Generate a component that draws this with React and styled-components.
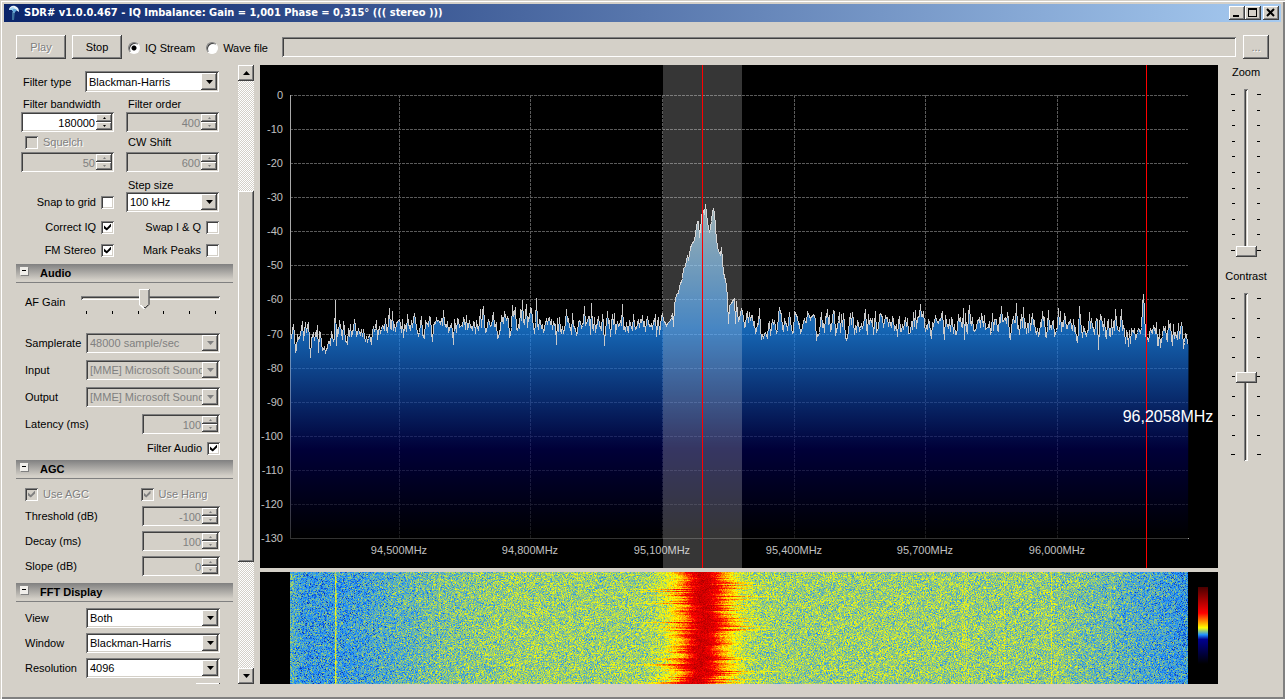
import React, { useEffect, useLayoutEffect, useMemo, useRef, useState } from 'react';
import styled, { createGlobalStyle, css } from 'styled-components';

const GlobalStyle = createGlobalStyle`
  * {
    box-sizing: border-box;
  }

  body {
    margin: 0;
    background: #d4d0c8;
    color: #000;
    font-family: 'Liberation Sans', Arial, sans-serif;
    font-size: 11px;
    line-height: 14px;
    cursor: default;
  }

  button, input, select {
    margin: 0;
    padding: 0;
    border: 0;
    border-radius: 0;
    font: inherit;
    color: inherit;
  }
`;

const raised = css`
  background: #d4d0c8;
  box-shadow: inset -1px -1px #404040, inset 1px 1px #fff, inset -2px -2px #808080;
`;

const sunken = css`
  box-shadow: inset 1px 1px #808080, inset -1px -1px #fff, inset 2px 2px #404040, inset -2px -2px #d4d0c8;
`;

const etched = css`
  color: #808080;
  text-shadow: 1px 1px #fff;
`;

/* ---------- window ---------- */

const Window = styled.div`
  display: flex;
  flex-direction: column;
  height: 100vh;
  min-height: 400px;
  padding: 4px 4px 15px;
  background: #d4d0c8;
  box-shadow: inset 1px 1px #d4d0c8, inset 2px 2px #fff, inset -1px -1px #808080, inset -2px -2px #808080;
`;

const TitleBar = styled.header`
  display: flex;
  align-items: center;
  height: 18px;
  flex: none;
  padding: 0 2px 0 4px;
  background: linear-gradient(to right, #0a246a, #a6caf0);
`;

const Title = styled.h1`
  flex: 1;
  margin: 0 0 0 4px;
  color: #fff;
  font: bold 11px/18px 'DejaVu Sans Condensed', 'DejaVu Sans', sans-serif;
  white-space: nowrap;
`;

const TitleButton = styled.button`
  ${raised}
  width: 16px;
  height: 14px;
  margin-left: ${({ $apart }) => ($apart ? 2 : 0)}px;

  svg {
    display: block;
    width: 16px;
    height: 14px;
  }
`;

const Toolbar = styled.div`
  display: flex;
  align-items: center;
  height: 43px;
  flex: none;
  padding: 7px 12px 0;
`;

const PushButton = styled.button`
  ${raised}
  width: ${({ $small }) => ($small ? 26 : 50)}px;
  height: 24px;
  margin-left: ${({ $small }) => ($small ? 7 : 0)}px;

  & + & {
    margin-left: 6px;
  }

  &:disabled {
    ${etched}
  }
`;

const RadioLabel = styled.label`
  display: flex;
  align-items: center;
  gap: 5px;
  margin-left: ${({ $first }) => ($first ? 6 : 11)}px;
  padding-top: 1px;
`;

const Radio = styled.input`
  appearance: none;
  width: 12px;
  height: 12px;
  border: 1px solid;
  border-color: #808080 #fff #fff #808080;
  border-radius: 50%;
  background: #fff;
  box-shadow: inset 1px 1px #404040;

  &:checked {
    background: radial-gradient(circle at 5px 5px, #000 2px, #fff 3px);
  }
`;

const FileBox = styled.input`
  ${sunken}
  flex: 1;
  min-width: 0;
  height: 20px;
  margin-left: 14px;
  padding: 0 4px;
  background: #d4d0c8;
`;

const Body = styled.main`
  display: flex;
  flex: 1;
  min-height: 0;
  padding: 0 7px 0 12px;
`;

/* ---------- side panel ---------- */

const Panel = styled.div`
  width: 217px;
  flex: none;
  overflow: hidden;
`;

const ScrollBar = styled.div`
  display: flex;
  flex-direction: column;
  width: 16px;
  flex: none;
  margin: 0 6px 0 5px;
  background: repeating-conic-gradient(#fff 0 25%, #d4d0c8 0 50%) 0 0 / 2px 2px;
`;

const ScrollButton = styled.button`
  ${raised}
  display: grid;
  place-items: center;
  height: 16px;
  flex: none;
`;

const ScrollTrack = styled.div`
  display: flex;
  flex-direction: column;
  flex: 1;
`;

const ScrollGap = styled.div`
  flex: ${({ $size }) => $size};
`;

const ScrollThumb = styled.div`
  ${raised}
  flex: 371;
`;

const FilterSection = styled.section`
  padding: 6px 14px 4px 5px;
`;

const FilterType = styled.div`
  display: grid;
  grid-template-columns: 62px 1fr;
  align-items: center;
  height: 21px;
  margin-bottom: 4px;
  padding-left: 2px;
`;

const Pair = styled.div`
  display: grid;
  grid-template-columns: minmax(0, 1fr) minmax(0, 1fr);
  column-gap: 12px;
  align-items: ${({ $align }) => $align || 'center'};
  height: ${({ $height }) => $height || 20}px;
  margin-top: ${({ $space }) => $space || 0}px;
`;

const Caption = styled.label`
  padding-left: 2px;
  grid-column: ${({ $column }) => $column || 'auto'};
  white-space: nowrap;
`;

const CheckLabel = styled.label`
  display: flex;
  align-items: center;
  justify-content: ${({ $end }) => ($end ? 'flex-end' : 'flex-start')};
  gap: 5px;
  height: 14px;
  padding-left: ${({ $indent }) => $indent || 0}px;
  white-space: nowrap;
  ${({ $disabled }) => $disabled && etched}
`;

const CheckBox = styled.input`
  ${sunken}
  appearance: none;
  display: grid;
  width: 13px;
  height: 13px;
  background: ${({ disabled }) => (disabled ? '#d4d0c8' : '#fff')};

  &:checked::after {
    content: '';
    width: 7px;
    height: 7px;
    margin: 3px;
    background: ${({ disabled }) => (disabled ? '#808080' : '#000')};
    clip-path: polygon(0 30%, 40% 64%, 100% 0, 100% 42%, 40% 100%, 0 70%);
  }
`;

const SelectFrame = styled.div`
  display: grid;
  width: 100%;
  height: ${({ $tall }) => ($tall ? 21 : 20)}px;
`;

const NativeSelect = styled.select`
  ${sunken}
  appearance: none;
  grid-area: 1 / 1;
  min-width: 0;
  width: 100%;
  padding: 0 8px 0 4px;
  background: #fff;
  overflow: hidden;

  &:disabled {
    background: #d4d0c8;
    color: #808080;
    opacity: 1;
  }
`;

const SelectArrow = styled.span`
  ${raised}
  display: grid;
  place-items: center;
  grid-area: 1 / 1;
  justify-self: end;
  width: 16px;
  margin: 2px;
  pointer-events: none;
`;

const SpinFrame = styled.div`
  ${sunken}
  display: flex;
  width: ${({ $narrow }) => ($narrow ? '78px' : '100%')};
  height: 20px;
  padding: 2px;
  justify-self: end;
  background: ${({ $disabled }) => ($disabled ? '#d4d0c8' : '#fff')};
`;

const SpinInput = styled.input`
  flex: 1;
  width: 0;
  min-width: 0;
  padding: 2px 1px 0 0;
  background: transparent;
  text-align: right;

  &:disabled {
    color: #808080;
  }
`;

const SpinButtons = styled.div`
  display: grid;
  grid-template-rows: 8px 8px;
  width: 16px;
`;

const SpinButton = styled.button`
  ${raised}
  display: grid;
  place-items: center;
`;

const GroupHeader = styled.h2`
  display: flex;
  align-items: center;
  gap: 12px;
  height: 19px;
  margin: 0;
  padding-left: 4px;
  border-bottom: 1px solid #808080;
  background: linear-gradient(#808080, #d4d0c8 16px);
  font-size: 11px;
  line-height: 18px;
`;

const Collapse = styled.button`
  width: 8px;
  height: 8px;
  margin-bottom: 5px;
  background: linear-gradient(#000, #000) 2px 3px / 4px 1px no-repeat #f0eeea;
  box-shadow: 1px 1px #808080;
`;

const Group = styled.section`
  display: flex;
  flex-direction: column;
  gap: ${({ $gap }) => $gap}px;
  padding: ${({ $top }) => $top}px 13px ${({ $bottom }) => $bottom}px 9px;
`;

const Field = styled.div`
  display: grid;
  grid-template-columns: 61px minmax(0, 1fr);
  align-items: center;
  height: 20px;
  white-space: nowrap;
`;

const GainField = styled.div`
  display: grid;
  grid-template-columns: 56px minmax(0, 1fr);
  align-items: start;
  height: 37px;
`;

const GainCaption = styled.label`
  padding-top: 6px;
`;

const GainRange = styled.input`
  appearance: none;
  display: block;
  width: 100%;
  height: 20px;
  background: transparent;

  &::-webkit-slider-runnable-track {
    height: 4px;
    margin: 0 0 3px;
    ${sunken}
  }

  &::-webkit-slider-thumb {
    appearance: none;
    width: 11px;
    height: 21px;
    margin-top: -7px;
    background:
      linear-gradient(#fff, #fff) 0 0 / 10px 1px no-repeat,
      linear-gradient(#fff, #fff) 0 0 / 1px 16px no-repeat,
      linear-gradient(#404040, #404040) 10px 0 / 1px 16px no-repeat,
      linear-gradient(#808080, #808080) 9px 1px / 1px 15px no-repeat,
      linear-gradient(to top right, #fff 68%, transparent 68%) 0 16px / 6px 5px no-repeat,
      linear-gradient(to top left, #404040 72%, transparent 72%) 5px 16px / 6px 5px no-repeat,
      #d4d0c8;
    clip-path: polygon(0 0, 100% 0, 100% 76%, 50% 100%, 0 76%);
  }
`;

const GainTicks = styled.div`
  display: flex;
  justify-content: space-between;
  padding: 2px 4px 0 5px;

  i {
    width: 1px;
    height: 3px;
    background: #000;
  }
`;

const NextButton = styled.button`
  ${raised}
  align-self: flex-end;
  width: 24px;
  height: 20px;
  flex: none;
`;

/* ---------- displays ---------- */

const Displays = styled.div`
  display: grid;
  grid-template-rows: 1fr 112px;
  gap: 4px;
  flex: 1;
  min-width: 0;
`;

const Screen = styled.div`
  min-width: 0;
  min-height: 0;
  overflow: hidden;
  background: #000;

  svg {
    display: block;
  }
`;

const AxisText = styled.text`
  fill: #c0c0c0;
  font-size: 11px;
`;

const CursorText = styled.text`
  fill: #fff;
  font-size: 16px;
`;

const WaterfallScreen = styled(Screen)`
  display: flex;
  padding: 0 10px 0 30px;
`;

const WaterfallPlot = styled.div`
  flex: 1;
  min-width: 0;

  canvas {
    display: block;
  }
`;

const Legend = styled.div`
  width: 10px;
  margin: 15px 0 20px 10px;
  background: linear-gradient(#4a0000, #f00 34%, #ff0 53%, #1e90ff 62%, #000090 68%, #000);
`;

const Sliders = styled.aside`
  display: flex;
  flex-direction: column;
  align-items: center;
  width: 56px;
  flex: none;
`;

const SliderCaption = styled.label`
  padding-bottom: 10px;
`;

const VerticalSlider = styled.div`
  display: flex;
  justify-content: center;
  height: 168px;
  margin-bottom: 12px;
`;

const VerticalTicks = styled.div`
  display: flex;
  flex-direction: column;
  justify-content: space-between;
  align-items: ${({ $left }) => ($left ? 'flex-end' : 'flex-start')};
  width: 4px;
  padding: 5px 0 6px;

  i {
    width: 3px;
    height: 1px;
    background: #000;
  }

  i:first-child, i:last-child {
    width: 4px;
  }
`;

const VerticalRange = styled.input`
  appearance: none;
  writing-mode: vertical-lr;
  direction: rtl;
  width: 22px;
  height: 168px;
  background: transparent;

  &::-webkit-slider-runnable-track {
    width: 4px;
    height: 168px;
    ${sunken}
  }

  &::-webkit-slider-thumb {
    appearance: none;
    width: 21px;
    height: 11px;
    margin-left: -8px;
    ${raised}
  }
`;

/* ---------- small controls ---------- */

function Arrow({ up, size = 7, color = '#000' }) {
  const h = (size + 1) / 2;
  const points = up ? `0,${h} ${size},${h} ${size / 2},0` : `0,0 ${size},0 ${size / 2},${h}`;
  return (
    <svg width={size} height={h} display="block">
      <polygon points={points} fill={color} />
    </svg>
  );
}

function Select({ id, value, disabled, tall }) {
  return (
    <SelectFrame $tall={tall}>
      <NativeSelect id={id} disabled={disabled} defaultValue={value}>
        <option>{value}</option>
      </NativeSelect>
      <SelectArrow><Arrow color={disabled ? '#808080' : '#000'} /></SelectArrow>
    </SelectFrame>
  );
}

function Spin({ id, value, disabled, narrow }) {
  const [current, setCurrent] = useState(value);
  const color = disabled ? '#808080' : '#000';
  return (
    <SpinFrame $disabled={disabled} $narrow={narrow}>
      <SpinInput id={id} value={current} disabled={disabled} onChange={(e) => setCurrent(e.target.value)} />
      <SpinButtons>
        <SpinButton aria-label="Increase" disabled={disabled} onClick={() => setCurrent(Number(current) + 1)}>
          <Arrow up size={3} color={color} />
        </SpinButton>
        <SpinButton aria-label="Decrease" disabled={disabled} onClick={() => setCurrent(Number(current) - 1)}>
          <Arrow size={3} color={color} />
        </SpinButton>
      </SpinButtons>
    </SpinFrame>
  );
}

function Check({ label, checked, disabled, before, indent }) {
  const box = <CheckBox type="checkbox" defaultChecked={checked} disabled={disabled} />;
  return (
    <CheckLabel $end={before} $disabled={disabled} $indent={indent}>
      {!before && box}
      {label}
      {before && box}
    </CheckLabel>
  );
}

function Header({ children }) {
  return (
    <GroupHeader>
      <Collapse aria-label="Collapse" />
      {children}
    </GroupHeader>
  );
}

function Vertical({ id, label, ticks, value }) {
  const marks = Array.from({ length: ticks }, (_, i) => <i key={i} />);
  return (
    <>
      <SliderCaption htmlFor={id}>{label}</SliderCaption>
      <VerticalSlider>
        <VerticalTicks $left>{marks}</VerticalTicks>
        <VerticalRange id={id} type="range" defaultValue={value} />
        <VerticalTicks>{marks}</VerticalTicks>
      </VerticalSlider>
    </>
  );
}

/* ---------- signal ---------- */

const START = 94.2516;
const SPAN = 2.048;
const SAMPLES = 898;
const MARGIN = 30;

function random(seed) {
  let s = seed;
  return () => {
    s = (s + 0x6d2b79f5) | 0;
    let t = Math.imul(s ^ (s >>> 15), 1 | s);
    t = (t + Math.imul(t ^ (t >>> 7), 61 | t)) ^ t;
    return ((t ^ (t >>> 14)) >>> 0) / 4294967296;
  };
}

function interpolate(points, x) {
  if (x <= points[0][0]) return points[0][1];
  for (let i = 1; i < points.length; i += 1) {
    const [x1, y1] = points[i];
    if (x <= x1) {
      const [x0, y0] = points[i - 1];
      return y0 + ((y1 - y0) * (x - x0)) / (x1 - x0);
    }
  }
  return points[points.length - 1][1];
}

const station = [
  [373, -66], [376, -67.4], [380, -66], [382, -64], [383, -67.7], [384, -61.6], [386, -58.4], [388, -58],
  [389, -56], [392, -53.7], [393, -50.7], [395, -50.1], [397, -46.9], [398, -48.4], [400, -44.9], [401, -43.7],
  [404, -42.5], [406, -38.7], [407, -37], [408, -37], [409, -41.6], [411, -36.4], [412, -33.4], [414, -34.9],
  [415, -32], [417, -37], [419, -40.2], [421, -37], [422, -34], [423, -33.4], [424, -34.3], [425, -38.4],
  [426, -42.5], [428, -45.7], [430, -46.6], [431, -44.6], [432, -48.4], [433, -51.9], [435, -54.3], [436, -55.4],
  [437, -59.8], [438, -66.9], [439, -61.6], [441, -61], [444, -59.5], [445, -66.9], [446, -60.4], [448, -66.3],
  [450, -62.5], [452, -64.8],
];

const floor = [
  [0, -70], [20, -71.5], [60, -69.5], [110, -67.5], [160, -67], [370, -67], [460, -67.5], [600, -66.5],
  [760, -66.5], [800, -67.5], [860, -69.5], [897, -70.5],
];

const spurs = { 20: -77, 28: -75.5, 35: -75.5, 45: -60.3, 99: -62.5, 163: -73, 232: -60.3, 266: -73, 294: -62, 301: -61, 314: -73.5, 807: -74.5, 851: -62, 852: -58.4, 853: -63 };

function buildTrace() {
  const rnd = random(4242);
  let last = 0;
  return Array.from({ length: SAMPLES }, (_, i) => {
    const gauss = rnd() + rnd() + rnd() + rnd() - 2;
    last = last * 0.25 + gauss * 3.8;
    if (spurs[i]) return spurs[i];
    if (i >= 373 && i <= 452) return interpolate(station, i);
    return interpolate(floor, i) + last;
  });
}

function useSize() {
  const ref = useRef(null);
  const [size, setSize] = useState({ width: 0, height: 0 });
  useLayoutEffect(() => {
    const measure = () => setSize({ width: ref.current.clientWidth, height: ref.current.clientHeight });
    measure();
    const observer = new ResizeObserver(measure);
    observer.observe(ref.current);
    return () => observer.disconnect();
  }, []);
  return [ref, size];
}

const levels = Array.from({ length: 14 }, (_, i) => -10 * i);
const frequencies = [94.5, 94.8, 95.1, 95.4, 95.7, 96];

function Spectrum() {
  const [ref, { width, height }] = useSize();
  const trace = useMemo(buildTrace, []);
  const right = width - MARGIN;
  const bottom = height - MARGIN;
  const toX = (f) => Math.round(MARGIN + ((f - START) / SPAN) * (right - MARGIN));
  const toY = (db) => Math.round(MARGIN + (-db / 130) * (bottom - MARGIN));
  const points = trace
    .map((db, i) => `${Math.round(MARGIN + (i / (SAMPLES - 1)) * (right - MARGIN)) + 0.5},${toY(db) + 0.5}`)
    .join(' ');
  const tuned = toX(95.1915);
  const cursor = toX(96.2045);

  return (
    <Screen ref={ref}>
      {width > 0 && (
        <svg width={width} height={height}>
          <defs>
            <linearGradient id="fill" gradientUnits="userSpaceOnUse" x1="0" y1={MARGIN} x2="0" y2={bottom}>
              <stop offset="0" stopColor="#fff" />
              <stop offset="0.27" stopColor="#add8e6" />
              <stop offset="0.53" stopColor="#1e90ff" />
              <stop offset="0.8" stopColor="#000050" />
              <stop offset="1" stopColor="#000" />
            </linearGradient>
          </defs>
          <g stroke="#5a5a5a" strokeDasharray="3 1" shapeRendering="crispEdges">
            {levels.slice(0, -1).map((db) => (
              <line key={db} x1={MARGIN} x2={right} y1={toY(db) + 0.5} y2={toY(db) + 0.5} />
            ))}
            {frequencies.map((f) => (
              <line key={f} x1={toX(f) + 0.5} x2={toX(f) + 0.5} y1={MARGIN} y2={bottom} />
            ))}
          </g>
          <path
            d={`M${MARGIN + 0.5} ${MARGIN}V${bottom + 0.5}H${right + 1}`}
            fill="none"
            stroke="#a9a9a9"
            shapeRendering="crispEdges"
          />
          <polygon points={`${MARGIN},${bottom + 1} ${points} ${right},${bottom + 1}`} fill="url(#fill)" fillOpacity="0.7" />
          <polyline points={points} fill="none" stroke="#cacaca" shapeRendering="crispEdges" />
          {levels.map((db) => (
            <AxisText key={db} x={MARGIN - 7} y={toY(db) + 4} textAnchor="end">{db}</AxisText>
          ))}
          {frequencies.map((f) => (
            <AxisText key={f} x={toX(f)} y={bottom + 16} textAnchor="middle">
              {`${f.toFixed(3).replace('.', ',')}MHz`}
            </AxisText>
          ))}
          <rect x={tuned - 39} y="0" width="79" height={height} fill="#fff" fillOpacity="0.21" />
          <path
            d={`M${tuned + 0.5} 0V${height}M${cursor + 0.5} 0V${height}`}
            fill="none"
            stroke="#f00"
            strokeWidth="1"
            shapeRendering="crispEdges"
          />
          <CursorText x={cursor + 22} y={toY(-94) + 7} textAnchor="middle">96,2058MHz</CursorText>
        </svg>
      )}
    </Screen>
  );
}

const palette = [
  [0, [0, 0, 0]], [0.32, [0, 0, 144]], [0.38, [30, 144, 255]], [0.47, [255, 255, 0]], [0.66, [255, 0, 0]], [1, [74, 0, 0]],
];

function paletteColor(v) {
  return [0, 1, 2].map((c) => interpolate(palette.map(([pos, rgb]) => [pos, rgb[c]]), v));
}

const intensity = [
  [0, 0.405], [14, 0.388], [60, 0.39], [90, 0.4], [140, 0.415], [220, 0.43], [450, 0.43], [600, 0.43],
  [760, 0.427], [820, 0.41], [860, 0.397], [897, 0.385],
];

const carriers = { 45: 0.07, 46: 0.03, 149: 0.018, 672: 0.014, 674: 0.018, 676: 0.016, 678: 0.01, 714: 0.02, 761: 0.03, 820: 0.012 };

const colors = Array.from({ length: 512 }, (_, i) => paletteColor(i / 511));

function Waterfall() {
  const [ref, { width, height }] = useSize();
  const canvas = useRef(null);

  useEffect(() => {
    if (!width || !height) return;
    const ctx = canvas.current.getContext('2d');
    const image = ctx.createImageData(width, height);
    const rnd = random(99);
    const base = Array.from({ length: SAMPLES }, (_, i) => interpolate(intensity, i) + (carriers[i] || 0));
    let center = 412;
    for (let y = 0; y < height; y += 1) {
      center += (412 - center) * 0.25 + (rnd() - 0.5) * 9;
      // some rows splash far to one side of the carrier
      const leftWidth = 12 + rnd() * 13 + (rnd() > 0.8 ? 6 + rnd() * 20 : 0);
      const rightWidth = 12 + rnd() * 13 + (rnd() > 0.85 ? 6 + rnd() * 18 : 0);
      for (let x = 0; x < width; x += 1) {
        const i = Math.min(SAMPLES - 1, Math.floor((x / width) * SAMPLES));
        const side = i < center ? leftWidth : rightWidth;
        const d = (i - center) / side;
        const wide = (i - 412) / 29;
        const signal = 0.22 * Math.exp(-d * d) + 0.1 * Math.exp(-wide * wide);
        const noise = (rnd() + rnd() + rnd() - 1.5) * (0.043 + signal * 0.08);
        const v = base[i] + noise + signal;
        const [r, g, b] = colors[Math.max(0, Math.min(511, Math.round(v * 511)))];
        const at = (y * width + x) * 4;
        image.data[at] = r;
        image.data[at + 1] = g;
        image.data[at + 2] = b;
        image.data[at + 3] = 255;
      }
    }
    ctx.putImageData(image, 0, 0);
  }, [width, height]);

  return (
    <WaterfallScreen>
      <WaterfallPlot ref={ref}>
        <canvas ref={canvas} width={width} height={height} />
      </WaterfallPlot>
      <Legend />
    </WaterfallScreen>
  );
}

/* ---------- page ---------- */

function AppIcon() {
  return (
    <svg width="12" height="16" viewBox="0 0 12 16">
      <path d="M4 7L7 6L6 15H4Z" fill="#3b6f9c" />
      <path d="M1 5C1 2 4 0 7 1C10 2 11 4 11 7L8 5L6 8L4 5Z" fill="#e8f2fa" />
      <path d="M4 5C5 3 7 3 9 5L6 8Z" fill="#5fa8dc" />
      <path d="M1 5C2 3 4 2 6 2L4 5Z" fill="#9fd0f0" />
    </svg>
  );
}

export default function App() {
  return (
    <>
      <GlobalStyle />
      <Window>
        <TitleBar>
          <AppIcon />
          <Title>SDR# v1.0.0.467 - IQ Imbalance: Gain = 1,001 Phase = 0,315° ((( stereo )))</Title>
          <TitleButton aria-label="Minimize">
            <svg><path d="M4 9H10V11H4Z" /></svg>
          </TitleButton>
          <TitleButton aria-label="Maximize">
            <svg><path d="M3 2H12V11H3ZM4 4V10H11V4Z" fillRule="evenodd" /></svg>
          </TitleButton>
          <TitleButton aria-label="Close" $apart>
            <svg><path d="M4 3L11 10M11 3L4 10" stroke="#000" strokeWidth="2" /></svg>
          </TitleButton>
        </TitleBar>

        <Toolbar>
          <PushButton disabled>Play</PushButton>
          <PushButton>Stop</PushButton>
          <RadioLabel $first>
            <Radio type="radio" name="source" defaultChecked />
            IQ Stream
          </RadioLabel>
          <RadioLabel>
            <Radio type="radio" name="source" />
            Wave file
          </RadioLabel>
          <FileBox aria-label="Wave file path" disabled />
          <PushButton $small disabled>...</PushButton>
        </Toolbar>

        <Body>
          <Panel>
            <FilterSection>
              <FilterType>
                <label htmlFor="filter-type">Filter type</label>
                <Select id="filter-type" value="Blackman-Harris" tall />
              </FilterType>
              <Pair $height={16}>
                <Caption htmlFor="bandwidth">Filter bandwidth</Caption>
                <Caption htmlFor="order">Filter order</Caption>
              </Pair>
              <Pair>
                <Spin id="bandwidth" value="180000" />
                <Spin id="order" value="400" disabled />
              </Pair>
              <Pair>
                <Check label="Squelch" disabled indent={4} />
                <Caption htmlFor="cw-shift">CW Shift</Caption>
              </Pair>
              <Pair>
                <Spin id="squelch" value="50" disabled />
                <Spin id="cw-shift" value="600" disabled />
              </Pair>
              <Pair $align="end">
                <Caption htmlFor="step" $column={2}>Step size</Caption>
              </Pair>
              <Pair>
                <Check label="Snap to grid" before />
                <Select id="step" value="100 kHz" />
              </Pair>
              <Pair $space={5}>
                <Check label="Correct IQ" checked before />
                <Check label="Swap I & Q" before />
              </Pair>
              <Pair $space={3}>
                <Check label="FM Stereo" checked before />
                <Check label="Mark Peaks" before />
              </Pair>
            </FilterSection>

            <Header>Audio</Header>
            <Group $gap={7} $top={6} $bottom={5}>
              <GainField>
                <GainCaption htmlFor="gain">AF Gain</GainCaption>
                <div>
                  <GainRange id="gain" type="range" defaultValue="45" />
                  <GainTicks><i /><i /><i /><i /><i /><i /></GainTicks>
                </div>
              </GainField>
              <Field>
                <label htmlFor="samplerate">Samplerate</label>
                <Select id="samplerate" value="48000 sample/sec" disabled />
              </Field>
              <Field>
                <label htmlFor="input">Input</label>
                <Select id="input" value="[MME] Microsoft Soundmapper" disabled />
              </Field>
              <Field>
                <label htmlFor="output">Output</label>
                <Select id="output" value="[MME] Microsoft Soundmapper" disabled />
              </Field>
              <Field>
                <label htmlFor="latency">Latency (ms)</label>
                <Spin id="latency" value="100" disabled narrow />
              </Field>
              <Check label="Filter Audio" checked before />
            </Group>

            <Header>AGC</Header>
            <Group $gap={5} $top={8} $bottom={7}>
              <Pair $height={14}>
                <Check label="Use AGC" checked disabled />
                <Check label="Use Hang" checked disabled indent={12} />
              </Pair>
              <Field>
                <label htmlFor="threshold">Threshold (dB)</label>
                <Spin id="threshold" value="-100" disabled narrow />
              </Field>
              <Field>
                <label htmlFor="decay">Decay (ms)</label>
                <Spin id="decay" value="100" disabled narrow />
              </Field>
              <Field>
                <label htmlFor="slope">Slope (dB)</label>
                <Spin id="slope" value="0" disabled narrow />
              </Field>
            </Group>

            <Header>FFT Display</Header>
            <Group $gap={5} $top={6} $bottom={0}>
              <Field>
                <label htmlFor="view">View</label>
                <Select id="view" value="Both" />
              </Field>
              <Field>
                <label htmlFor="window">Window</label>
                <Select id="window" value="Blackman-Harris" />
              </Field>
              <Field>
                <label htmlFor="resolution">Resolution</label>
                <Select id="resolution" value="4096" />
              </Field>
              <NextButton aria-label="Gradient" />
            </Group>
          </Panel>

          <ScrollBar>
            <ScrollButton aria-label="Scroll up"><Arrow up /></ScrollButton>
            <ScrollTrack>
              <ScrollGap $size={110} />
              <ScrollThumb />
              <ScrollGap $size={106} />
            </ScrollTrack>
            <ScrollButton aria-label="Scroll down"><Arrow /></ScrollButton>
          </ScrollBar>

          <Displays>
            <Spectrum />
            <Waterfall />
          </Displays>

          <Sliders>
            <Vertical id="zoom" label="Zoom" ticks={11} value="0" />
            <Vertical id="contrast" label="Contrast" ticks={9} value="50" />
          </Sliders>
        </Body>
      </Window>
    </>
  );
}
